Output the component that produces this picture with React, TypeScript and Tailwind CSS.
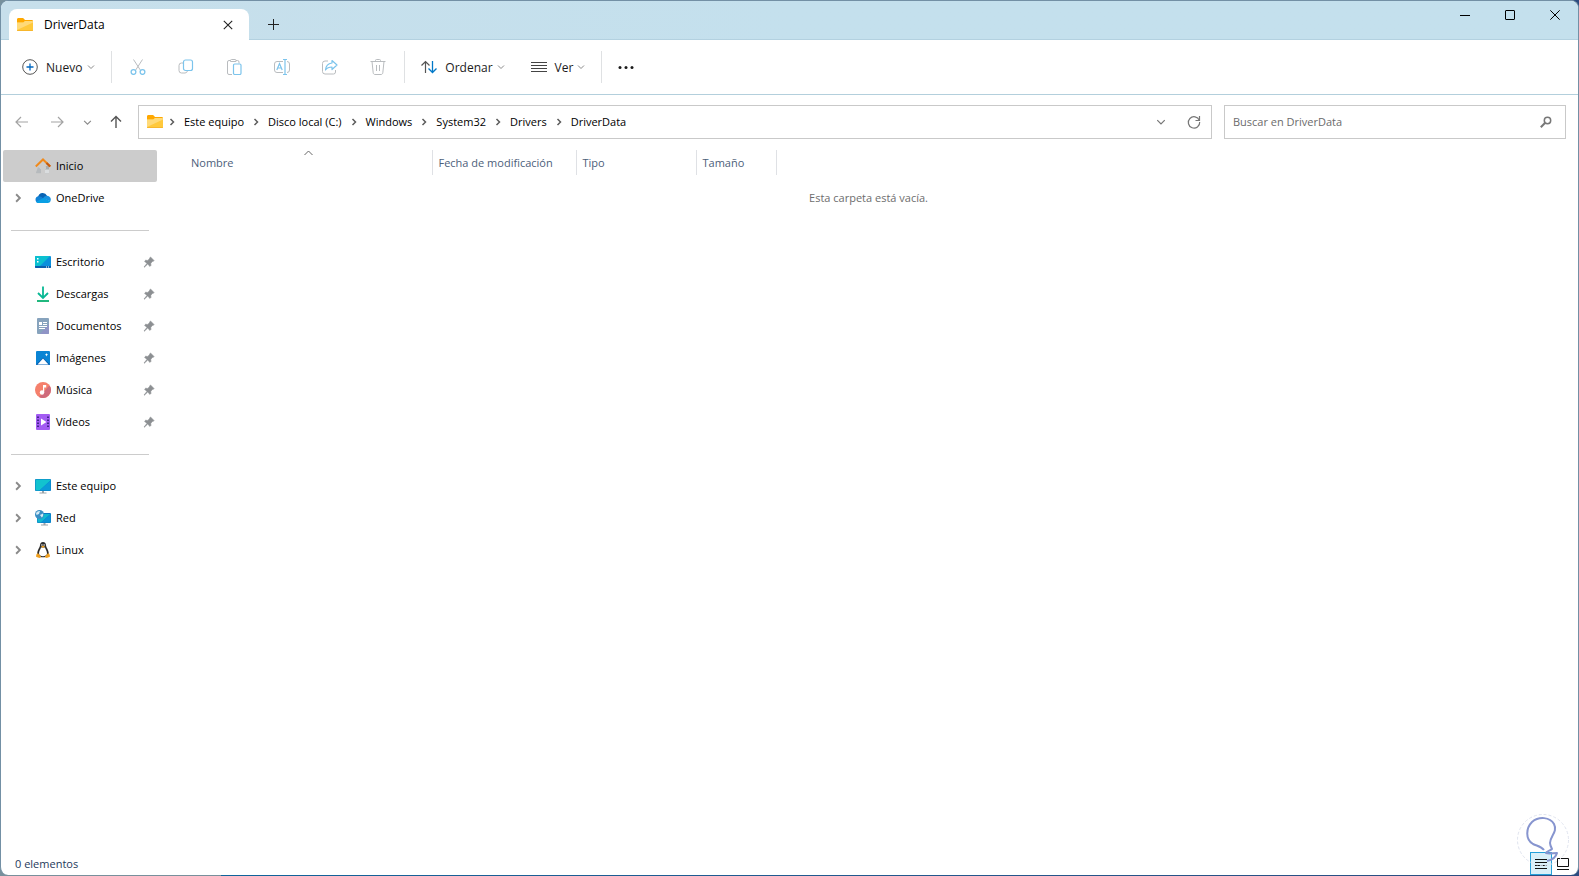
import React from "react";

type Glyph = () => React.ReactElement;

const Svg = ({ size = "size-4", box = "0 0 16 16", children }: { size?: string; box?: string; children: React.ReactNode }) => (
  <svg className={`${size} block shrink-0`} viewBox={box} fill="none" aria-hidden="true">
    {children}
  </svg>
);

const Folder = () => (
  <Svg>
    <path d="M0 2.5C0 1.7.6 1 1.4 1h4.2c.5 0 .8.2 1.100.5L8 3h6.700c.7 0 1.300.5 1.300 1.200V8H0z" fill="#ffa800" />
    <path d="M0 5.500h6.300L8 4h7.200c.5 0 .8.3.8.8v8.400c0 .5-.3.8-.8.8H.8c-.5 0-.8-.3-.8-.8z" fill="#ffc93c" />
    <path d="M0 5.500h6.300L8 4h7.200c.5 0 .8.3.8.8v.7L0 13z" fill="#ffda78" />
    <path d="M0 13h16v.3c0 .5-.3.700-.8.700H.8c-.5 0-.8-.200-.8-.7z" fill="#f7b62c" />
  </Svg>
);

const ChevronDown = ({ tone = "stroke-[#8a8a8a]", size = "size-2" }) => (
  <Svg size={size} box="0 0 8 8">
    <path d="M1 2.500 4 5.500 7 2.500" className={tone} />
  </Svg>
);

const ChevronRight = ({ tone = "stroke-[#5c5c5c]", size = "size-2" }) => (
  <Svg size={size} box="0 0 8 8">
    <path d="M2.500 1 5.500 4 2.500 7" className={tone} strokeWidth="1.5" />
  </Svg>
);

const Cut = () => (
  <Svg>
    <path d="M3.500 .5 10.300 11M12.500 .5 5.700 11" stroke="#b9bcbf" />
    <circle cx="3.500" cy="13" r="2.400" stroke="#7cc4ec" strokeWidth="1.300" />
    <circle cx="12.500" cy="13" r="2.400" stroke="#7cc4ec" strokeWidth="1.300" />
  </Svg>
);

const Copy = () => (
  <Svg>
    <path d="M5 4H3.500A2.500 2.500 0 0 0 1 6.500v5A2.500 2.500 0 0 0 3.500 14H7a2.500 2.500 0 0 0 2.400-2" stroke="#b9bcbf" />
    <rect x="5.500" y="1" width="9" height="10.500" rx="2" stroke="#7cc4ec" strokeWidth="1.200" />
  </Svg>
);

const Paste = () => (
  <Svg>
    <path d="M6 15.500H3A1.500 1.500 0 0 1 1.500 14V3A1.500 1.500 0 0 1 3 1.500h1.500M10 1.500h1.500A1.500 1.500 0 0 1 13 3v1.500M4.500 2.500v-1a1 1 0 0 1 1-1h3.500a1 1 0 0 1 1 1v1z" stroke="#b9bcbf" />
    <rect x="7.500" y="5" width="7.500" height="10.500" rx="1.200" stroke="#7cc4ec" strokeWidth="1.200" />
  </Svg>
);

const Rename = () => (
  <Svg>
    <path d="M9 13.500H3A2.500 2.500 0 0 1 .5 11V5A2.500 2.500 0 0 1 3 2.500h6M13 2.500A2.500 2.500 0 0 1 15.500 5v6a2.500 2.500 0 0 1-2.500 2.500" stroke="#b9bcbf" />
    <path d="M2.800 11 5.500 4.500 8.200 11M3.700 9h3.600M11 .5v15M9 .5h4M9 15.500h4" stroke="#7cc4ec" strokeWidth="1.200" />
  </Svg>
);

const Share = () => (
  <Svg>
    <path d="M6 2H3A2.500 2.500 0 0 0 .5 4.500v8A2.500 2.500 0 0 0 3 15h8.500a2 2 0 0 0 2-2v-2" stroke="#b9bcbf" />
    <path d="M10 1.500 15 6l-5 4.500V8C7 8 5 8.800 3.500 11 3.800 7 6 4.500 10 4z" stroke="#7cc4ec" strokeWidth="1.200" strokeLinejoin="round" />
  </Svg>
);

const Trash = () => (
  <Svg>
    <path d="M.5 2.500h15M5.500 2.500v-1a1 1 0 0 1 1-1h3a1 1 0 0 1 1 1v1M2 2.500l1.200 11.300c.1 1 .8 1.700 1.800 1.700h6c1 0 1.700-.7 1.800-1.700L14 2.500M6.500 6v6M9.500 6v6" stroke="#b9bcbf" />
  </Svg>
);

const NewItem = () => (
  <Svg>
    <circle cx="8" cy="8" r="7.300" stroke="#555" />
    <path d="M8 4.500v7M4.500 8h7" stroke="#0067c0" strokeWidth="1.300" />
  </Svg>
);

const Sort = () => (
  <Svg>
    <path d="M4.500 14V2.500M.5 6.500l4-4 4 4" stroke="#555" strokeWidth="1.200" />
    <path d="M11.500 2v11.500M7.500 9.500l4 4 4-4" stroke="#0078c8" strokeWidth="1.300" />
  </Svg>
);

const ViewLines = () => (
  <Svg>
    <path d="M0 3.500h16M0 6.500h16M0 9.500h16M0 12.500h16" stroke="#444" />
  </Svg>
);

const Home = () => (
  <Svg>
    <path d="M3 9 1 14.500c0 .5.200.700.6.700H6V11z" fill="#b6babd" />
    <path d="M7 8h7v6.500c0 .5-.2.700-.6.700H10V10z" fill="#a9aeb2" />
    <path d="M10 11.500h4v3c0 .5-.2.700-.6.700H10z" fill="#dadddf" />
    <path d="M5 8.500 8 6l3 2.500V11H5z" fill="#cccccc" />
    <path d="M.8 8.500 8 1.500l7.200 7" stroke="#f08a1c" strokeWidth="2" />
    <path d="M11.500 5l3.700 3.500" stroke="#c25a12" strokeWidth="2" />
  </Svg>
);

const Cloud = () => (
  <Svg>
    <path d="M3.200 6.500A4.700 4.700 0 0 1 12 5.800L9 10.500 1.500 8z" fill="#0a64b4" />
    <path d="M3.500 13a3.400 3.400 0 0 1-.3-6.700c1-.2 2.100 0 3 .5l5.800 4.700L9 13z" fill="#1182d6" />
    <path d="M8 8.500c1-2 2.300-2.900 4-2.800a3.700 3.700 0 0 1 3.300 5.500z" fill="#1a92e0" />
    <path d="M1 11.800 8.500 8l7 3.300A2.800 2.800 0 0 1 12.800 13H3.500A3.200 3.200 0 0 1 1 11.800z" fill="#0a9fe4" />
  </Svg>
);

const Desktop = () => (
  <Svg>
    <rect y="2" width="16" height="12" rx="1" fill="#0a8fdc" />
    <path d="M0 3a1 1 0 0 1 1-1h14L4 13H0z" fill="#0bc0d0" />
    <path d="M0 12h16v1a1 1 0 0 1-1 1H1a1 1 0 0 1-1-1z" fill="#0a5fae" />
    <path d="M2 4h1.500v1.500H2zM2 7h1.500v1.500H2zM11 12.500h1v1h-1zM13 12.500h1v1h-1z" fill="#fff" />
  </Svg>
);

const Download = () => (
  <Svg>
    <path d="M8 .5v11M3 7l5 5 5-5" stroke="#08b894" strokeWidth="1.800" />
    <path d="M2 15h12" stroke="#08b070" strokeWidth="1.800" />
  </Svg>
);

const Documents = () => (
  <Svg>
    <rect x="2" width="12" height="16" rx="1" fill="#87a3bd" />
    <path d="M14 6v9a1 1 0 0 1-1 1H5z" fill="#8f94c6" />
    <path d="M4 4h3v3H4zM8 4h4v1H8zM8 6h4v1H8zM4 8h8v1H4zM4 10h6v1H4z" fill="#fff" />
  </Svg>
);

const Images = () => (
  <Svg>
    <rect x="1" y="1" width="14" height="14" rx="1" fill="#0a84d4" />
    <path d="M1 14.500 8 7.500l7 7-.5.5h-13z" fill="#0a62b4" />
    <path d="M2.500 14.500 8 8.500l5.500 6z" fill="#fff" />
    <path d="m11.500 3 .5 1.200 1.200.5-1.200.5-.5 1.200-.5-1.200-1.200-.5 1.200-.5z" fill="#fff" />
  </Svg>
);

const Music = () => (
  <Svg>
    <circle cx="8" cy="8" r="8" fill="#f5806c" />
    <path d="M14.500 3.500A8 8 0 0 1 4 14.900z" fill="#cf6b7c" />
    <circle cx="7" cy="10.500" r="2.200" fill="#fff" />
    <path d="M8 3h3.200v2.500H9.200v5H8z" fill="#fff" />
  </Svg>
);

const Videos = () => (
  <Svg>
    <rect x="1" width="14" height="16" rx="1" fill="#a35cf2" />
    <path d="M2 2.500h2v1.500H2zM2 5.500h2V7H2zM2 8.500h2V10H2zM2 11.500h2V13H2zM12 2.500h2v1.500h-2zM12 5.500h2V7h-2zM12 8.500h2V10h-2zM12 11.500h2V13h-2z" fill="#42258c" />
    <path d="M6 4.500 11.500 8 6 11.500z" fill="#fff" />
  </Svg>
);

const Computer = () => (
  <Svg>
    <path d="M7 12h2v2.500h2.500v1h-7v-1H7z" fill="#9aa3aa" />
    <rect y="1" width="16" height="12" rx="1" fill="#0a78c4" />
    <path d="M.5 2.500c0-.5.300-1 1-1h13c.5 0 1 .3 1 1l-11 10h-3c-.7 0-1-.5-1-1z" fill="#12c3cf" />
    <path d="M15.500 2.500v9c0 .7-.5 1-1 1h-10z" fill="#0b9bd8" />
  </Svg>
);

const Network = () => (
  <Svg>
    <path d="M8.500 12h2v2.500H13v1H6v-1h2.500z" fill="#9aa3aa" />
    <rect x="2" y="3" width="14" height="10" rx="1" fill="#0a78c4" />
    <path d="M2.500 4h13L6 12.500H3c-.3 0-.5-.2-.5-.5z" fill="#12b8cf" />
    <path d="M15.500 4v8.500H6z" fill="#0b93d6" />
    <circle cx="4.500" cy="4.500" r="4.500" fill="#3b8ec4" />
    <path d="M1 3c1-1.500 2.500-2.200 4-2L4 4 1.500 5zM5 5l3-1.500c.5 1.500 0 3-1.200 4z" fill="#d5ebf5" />
  </Svg>
);

const Penguin = () => (
  <Svg>
    <path d="M8 0c2 0 3 1.400 3 3.300 0 2.200 2.800 4.700 2.800 8 0 2.300-2.300 4-5.800 4s-5.800-1.700-5.800-4c0-3.300 2.800-5.800 2.800-8C5 1.400 6 0 8 0z" fill="#2a2a2a" />
    <path d="M6 5.500h4c.5 2 2 3.500 2 6 0 1.800-2 2.700-4 2.700s-4-.9-4-2.700c0-2.500 1.500-4 2-6z" fill="#fff" />
    <circle cx="6.900" cy="3" r=".8" fill="#fff" />
    <circle cx="9.100" cy="3" r=".8" fill="#fff" />
    <path d="M6 4.500 8 3.700l2 .8-2 1.500z" fill="#f0a020" />
    <path d="M2.800 11 6.200 14.800c-.8 1.200-1.700 1.300-2.500 1L1.500 15c-.7-.4-.3-1-.3-2 .1-1 1-.7 1.600-2zM13.200 11 9.800 14.800c.8 1.200 1.700 1.300 2.500 1l2.200-.8c.7-.4.300-1 .3-2-.1-1-1-.7-1.600-2z" fill="#f0a020" />
  </Svg>
);

const Pin = () => (
  <Svg size="size-3" box="0 0 12 12">
    <path d="M7.500 1 11 4.500l-.8.900-.6-.1L7.800 7.200l.1 2.300-.9.900L4.700 8.100 1.300 11.200 1 11l2.900-3.500L1.600 5.200l.9-.9 2.300.1L6.700 2.600l-.1-.7z" fill="#8c8f92" stroke="#8c8f92" strokeWidth=".6" />
  </Svg>
);

type Entry = { label: string; icon: Glyph; expandable?: boolean; pinned?: boolean; active?: boolean };

const groups: Entry[][] = [
  [
    { label: "Inicio", icon: Home, active: true },
    { label: "OneDrive", icon: Cloud, expandable: true },
  ],
  [
    { label: "Escritorio", icon: Desktop, pinned: true },
    { label: "Descargas", icon: Download, pinned: true },
    { label: "Documentos", icon: Documents, pinned: true },
    { label: "Imágenes", icon: Images, pinned: true },
    { label: "Música", icon: Music, pinned: true },
    { label: "Vídeos", icon: Videos, pinned: true },
  ],
  [
    { label: "Este equipo", icon: Computer, expandable: true },
    { label: "Red", icon: Network, expandable: true },
    { label: "Linux", icon: Penguin, expandable: true },
  ],
];

const actions: { label: string; icon: Glyph }[] = [
  { label: "Cortar", icon: Cut },
  { label: "Copiar", icon: Copy },
  { label: "Pegar", icon: Paste },
  { label: "Cambiar nombre", icon: Rename },
  { label: "Compartir", icon: Share },
  { label: "Eliminar", icon: Trash },
];

const path = ["Este equipo", "Disco local (C:)", "Windows", "System32", "Drivers", "DriverData"];

function TitleBar() {
  return (
    <header className="flex h-[39px] shrink-0 border-b border-[#b3d1e0] bg-linear-to-r from-[#c7dfeb] via-[#c4e0ed] to-[#c4e0ed]">
      <div className="mt-2 ml-2 flex h-[31px] w-60 items-center rounded-t-lg bg-white pr-3 pl-2">
        <Folder />
        <span className="ml-[11px] flex-1 text-xs">DriverData</span>
        <button aria-label="Cerrar pestaña" className="p-1">
          <Svg size="size-[10px]" box="0 0 10 10">
            <path d="M.8.8l8.400 8.400M9.200.8.8 9.200" stroke="#222" strokeWidth="1.100" />
          </Svg>
        </button>
      </div>
      <button aria-label="Nueva pestaña" className="mt-[7px] ml-2 flex size-8 items-center justify-center">
        <Svg size="size-[11px]" box="0 0 11 11">
          <path d="M5.500 0v11M0 5.500h11" stroke="#222" />
        </Svg>
      </button>
      <div className="ml-auto flex h-7">
        <button aria-label="Minimizar" className="flex w-[45px] items-center justify-center">
          <Svg size="size-[10px]" box="0 0 10 10">
            <path d="M0 5.500h10" stroke="#000" />
          </Svg>
        </button>
        <button aria-label="Maximizar" className="flex w-[45px] items-center justify-center">
          <Svg size="size-[10px]" box="0 0 10 10">
            <rect x=".5" y=".5" width="9" height="9" rx=".5" stroke="#000" />
          </Svg>
        </button>
        <button aria-label="Cerrar" className="flex w-[46px] items-center justify-center">
          <Svg size="size-[10px]" box="0 0 10 10">
            <path d="M.3.3l9.400 9.400M9.700.3.3 9.700" stroke="#000" />
          </Svg>
        </button>
      </div>
    </header>
  );
}

const Divider = () => <div className="h-8 w-px bg-[#dfe1e3]" />;

function Toolbar() {
  return (
    <div className="flex h-[55px] shrink-0 items-center border-b border-[#b3cfdc] text-xs text-[#1b1b1b]">
      <button className="ml-[21px] flex items-center">
        <NewItem />
        <span className="mr-[5px] ml-2 pt-0.5">Nuevo</span>
        <ChevronDown />
      </button>
      <div className="ml-4 flex items-center">
        <Divider />
        <div className="flex gap-8 px-[18px]">
          {actions.map(({ label, icon: Icon }) => (
            <button key={label} aria-label={label} disabled>
              <Icon />
            </button>
          ))}
        </div>
        <Divider />
      </div>
      <button className="ml-4 flex items-center">
        <Sort />
        <span className="mr-1 ml-2 pt-0.5">Ordenar</span>
        <ChevronDown />
      </button>
      <button className="ml-[26px] flex items-center">
        <ViewLines />
        <span className="mr-1 ml-2 pt-0.5">Ver</span>
        <ChevronDown />
      </button>
      <div className="ml-4 flex items-center">
        <Divider />
        <button aria-label="Ver más" className="ml-4">
          <Svg>
            <circle cx="2" cy="8.500" r="1.500" fill="#1b1b1b" />
            <circle cx="8" cy="8.500" r="1.500" fill="#1b1b1b" />
            <circle cx="14" cy="8.500" r="1.500" fill="#1b1b1b" />
          </Svg>
        </button>
      </div>
    </div>
  );
}

function AddressBar() {
  return (
    <div className="flex shrink-0 items-center pt-[10px] pr-3 pb-[11px] pl-[13px]">
      <nav aria-label="Historial" className="flex w-[124px] shrink-0 items-center">
        <button aria-label="Atrás" className="mr-[19px]">
          <Svg>
            <path d="M7 3 2 8l5 5M2 8h12" stroke="#a3a3a3" strokeWidth="1.200" />
          </Svg>
        </button>
        <button aria-label="Adelante" className="mr-[18px]">
          <Svg>
            <path d="M9 3l5 5-5 5M14 8H2" stroke="#a3a3a3" strokeWidth="1.200" />
          </Svg>
        </button>
        <button aria-label="Ubicaciones recientes" className="mr-4">
          <ChevronDown size="size-[9px]" />
        </button>
        <button aria-label="Subir">
          <Svg>
            <path d="M3 7.500l5-5 5 5M8 2.500V14" stroke="#555" strokeWidth="1.400" />
          </Svg>
        </button>
      </nav>
      <div className="flex h-[34px] min-w-0 flex-1 items-center border border-[#c9c9c9] pl-2">
        <Folder />
        <ol className="ml-[5px] flex flex-1 items-center text-[11px] leading-4 whitespace-nowrap">
          {path.map((part) => (
            <li key={part} className="flex items-center">
              <ChevronRight />
              <a href="#" className="px-2">
                {part}
              </a>
            </li>
          ))}
        </ol>
        <button aria-label="Ubicaciones anteriores" className="mr-5">
          <ChevronDown tone="stroke-[#777]" size="size-[10px]" />
        </button>
        <button aria-label="Actualizar" className="mr-[9px]">
          <Svg>
            <path d="M13.300 6.300A5.700 5.700 0 1 0 13.700 8" stroke="#777" strokeWidth="1.200" />
            <path d="M13.500 2v4.500H9.500" stroke="#777" strokeWidth="1.200" />
          </Svg>
        </button>
      </div>
      <label className="ml-3 flex h-[34px] w-[342px] items-center border border-[#c9c9c9] pr-[13px] pl-2">
        <input
          type="search"
          aria-label="Buscar en DriverData"
          placeholder="Buscar en DriverData"
          className="min-w-0 flex-1 text-[11px] leading-4 outline-none placeholder:text-[#6b6b6b]"
        />
        <Svg size="size-3" box="0 0 12 12">
          <circle cx="7.500" cy="4.500" r="3.200" stroke="#777" strokeWidth="1.500" />
          <path d="M5.200 6.800.8 11.200" stroke="#777" strokeWidth="2" />
        </Svg>
      </label>
    </div>
  );
}

function Sidebar() {
  return (
    <nav aria-label="Panel de navegación" className="w-[158px] shrink-0 px-0.5 text-[11px] leading-4">
      {groups.map((group, i) => (
        <React.Fragment key={i}>
          {i > 0 && (
            <div className="flex h-8 items-center px-2">
              <hr className="w-full border-[#cccccc]" />
            </div>
          )}
          <ul>
            {group.map(({ label, icon: Icon, expandable, pinned, active }) => (
              <li key={label}>
                <a
                  href="#"
                  className={`flex h-8 items-center rounded-xs pr-0.5 pl-[10px] ${active ? "bg-[#cccccc]" : ""}`}
                >
                  <span className="w-[22px]">{expandable && <ChevronRight tone="stroke-[#8a8a8a]" size="size-[10px]" />}</span>
                  <Icon />
                  <span className="ml-[5px] flex-1">{label}</span>
                  {pinned && <Pin />}
                </a>
              </li>
            ))}
          </ul>
        </React.Fragment>
      ))}
    </nav>
  );
}

function FileList() {
  return (
    <main className="min-w-0 flex-1">
      <table className="w-full table-fixed text-left text-[11px] leading-4">
        <colgroup>
          <col className="w-[273px]" />
          <col className="w-36" />
          <col className="w-[120px]" />
          <col className="w-20" />
          <col />
        </colgroup>
        <thead>
          <tr className="h-[25px] text-[#4c607a]">
            <th className="relative border-r border-[#dfe1e5] p-0 pl-8 font-normal">
              Nombre
              <span className="absolute top-0 left-[145px]">
                <Svg size="size-[9px]" box="0 0 9 9">
                  <path d="M.5 5l4-4 4 4" stroke="#666" />
                </Svg>
              </span>
            </th>
            <th className="border-r border-[#dfe1e5] p-0 pl-1.5 font-normal">Fecha de modificación</th>
            <th className="border-r border-[#dfe1e5] p-0 pl-1.5 font-normal">Tipo</th>
            <th className="border-r border-[#dfe1e5] p-0 pl-1.5 font-normal">Tamaño</th>
            <th className="p-0" />
          </tr>
        </thead>
        <tbody>
          <tr>
            <td colSpan={5} className="h-[46px] p-0 text-center text-[#6d6d6d]">
              Esta carpeta está vacía.
            </td>
          </tr>
        </tbody>
      </table>
    </main>
  );
}

function StatusBar() {
  return (
    <footer className="relative flex h-[23px] shrink-0 items-center pl-[14px] text-[11px] leading-4 text-[#1e395b]">
      <span>0 elementos</span>
      <div className="mr-[9px] ml-auto flex h-full items-center">
        <button
          aria-label="Detalles"
          className="flex h-full w-[22px] items-center justify-center border border-[#26a0da] bg-[#d9eff8]"
        >
          <Svg size="size-3" box="0 0 12 12">
            <path d="M0 1.500h12M0 4.500h12M0 7.500h12M0 10.500h12" stroke="#111" />
          </Svg>
        </button>
        <button aria-label="Iconos grandes" className="ml-[5px]">
          <Svg size="size-3" box="0 0 12 12">
            <path d="M.5.5h11v8H.5zM0 11.500h12" stroke="#111" />
          </Svg>
        </button>
      </div>
      <div className="pointer-events-none absolute right-[9px] bottom-[9px]">
        <Svg size="size-[52px]" box="0 0 52 52">
          <circle cx="26" cy="26" r="25.500" stroke="#dfe3ee" strokeDasharray="3 2" />
          <path
            d="M27 36c-3-4-7-4-11-6C8 25 9 14 15 8c7-6 18-5 22 2 4 8-4 12-4 19 0 2 1 4 2 6-2 2-6 2-6 4 3 1 7 0 11 0-1 4-5 7-10 8"
            stroke="#8795cf"
            strokeWidth="2"
            strokeLinejoin="round"
          />
        </Svg>
      </div>
    </footer>
  );
}

export default function App() {
  return (
    <div className="h-screen bg-linear-to-r from-[#78909c] from-14% via-[#0f649b] via-14% to-[#2c4c80] pb-px font-['Open_Sans','Noto_Sans',sans-serif] text-black">
      <div className="flex h-full flex-col overflow-hidden rounded-lg border border-b-0 border-[#7390a5] bg-white">
        <TitleBar />
        <Toolbar />
        <AddressBar />
        <div className="flex min-h-0 flex-1">
          <Sidebar />
          <FileList />
        </div>
        <StatusBar />
      </div>
    </div>
  );
}
